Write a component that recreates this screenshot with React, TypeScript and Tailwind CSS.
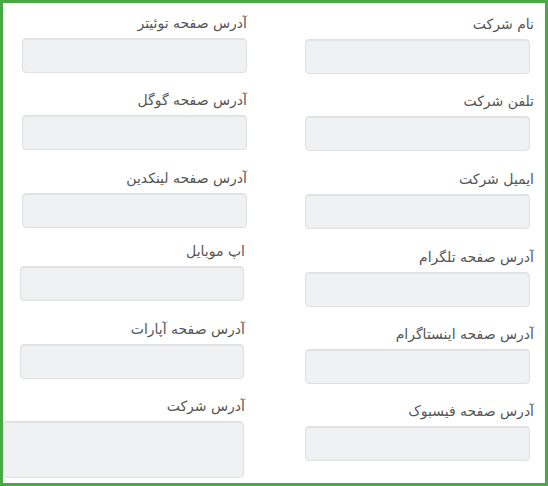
const font = { fontFamily: '"DejaVu Sans", "Noto Sans", sans-serif' };

type Field = {
  label: string;
  labelPad: string;
  inputBox: string;
  gap: string;
  area?: boolean;
};

// right column (first in rtl)
const rightFields: Field[] = [
  { label: "نام شرکت", labelPad: "pr-[11px]", inputBox: "mr-[15px] w-[225px]", gap: "mb-[17px]" },
  { label: "تلفن شرکت", labelPad: "pr-[11px]", inputBox: "mr-[15px] w-[225px]", gap: "mb-[18px]" },
  { label: "ایمیل شرکت", labelPad: "pr-[11px]", inputBox: "mr-[15px] w-[225px]", gap: "mb-[18px]" },
  { label: "آدرس صفحه تلگرام", labelPad: "pr-[11px]", inputBox: "mr-[15px] w-[225px]", gap: "mb-[17px]" },
  { label: "آدرس صفحه اینستاگرام", labelPad: "pr-[11px]", inputBox: "mr-[15px] w-[225px]", gap: "mb-[17px]" },
  { label: "آدرس صفحه فیسبوک", labelPad: "pr-[11px]", inputBox: "mr-[15px] w-[225px]", gap: "mb-0" },
];

const leftFields: Field[] = [
  { label: "آدرس صفحه توئیتر", labelPad: "pr-[43px]", inputBox: "mr-[43px] w-[225px]", gap: "mb-[17px]" },
  { label: "آدرس صفحه گوگل", labelPad: "pr-[43px]", inputBox: "mr-[43px] w-[225px]", gap: "mb-[18px]" },
  { label: "آدرس صفحه لینکدین", labelPad: "pr-[43px]", inputBox: "mr-[43px] w-[225px]", gap: "mb-[13px]" },
  { label: "اپ موبایل", labelPad: "pr-[45px]", inputBox: "mr-[46px] w-[224px]", gap: "mb-[18px]" },
  { label: "آدرس صفحه آپارات", labelPad: "pr-[45px]", inputBox: "mr-[46px] w-[224px]", gap: "mb-[17px]" },
  { label: "آدرس شرکت", labelPad: "pr-[45px]", inputBox: "mr-[46px] w-[241px]", gap: "mb-0", area: true },
];

function FormField({ f }: { f: Field }) {
  return (
    <div className={f.gap}>
      <label className={`block h-[20px] mb-[5px] text-[14px] leading-[20px] text-[#555] ${f.labelPad}`}>
        {f.label}
      </label>
      {f.area ? (
        <textarea
          readOnly
          className={`block h-[57px] resize-none rounded-[4px] border border-[#e0e0e0] bg-[#f0f1f3] shadow-[inset_0_1px_1px_rgba(0,0,0,0.06)] outline-none ${f.inputBox}`}
        />
      ) : (
        <input
          readOnly
          className={`block h-[35px] rounded-[4px] border border-[#e0e0e0] bg-[#f0f1f3] shadow-[inset_0_1px_1px_rgba(0,0,0,0.06)] outline-none ${f.inputBox}`}
        />
      )}
    </div>
  );
}

export default function App() {
  return (
    <div
      dir="rtl"
      style={font}
      className="box-border w-[548px] h-[486px] overflow-hidden border-[3px] border-[#48a945] bg-white"
    >
      <div className="grid grid-cols-[255px_287px]">
        {/* right side */}
        <div className="pt-[11px]">
          {rightFields.map((f) => (
            <FormField key={f.label} f={f} />
          ))}
        </div>
        {/* left side */}
        <div className="pt-[10px]">
          {leftFields.map((f) => (
            <FormField key={f.label} f={f} />
          ))}
        </div>
      </div>
    </div>
  );
}
